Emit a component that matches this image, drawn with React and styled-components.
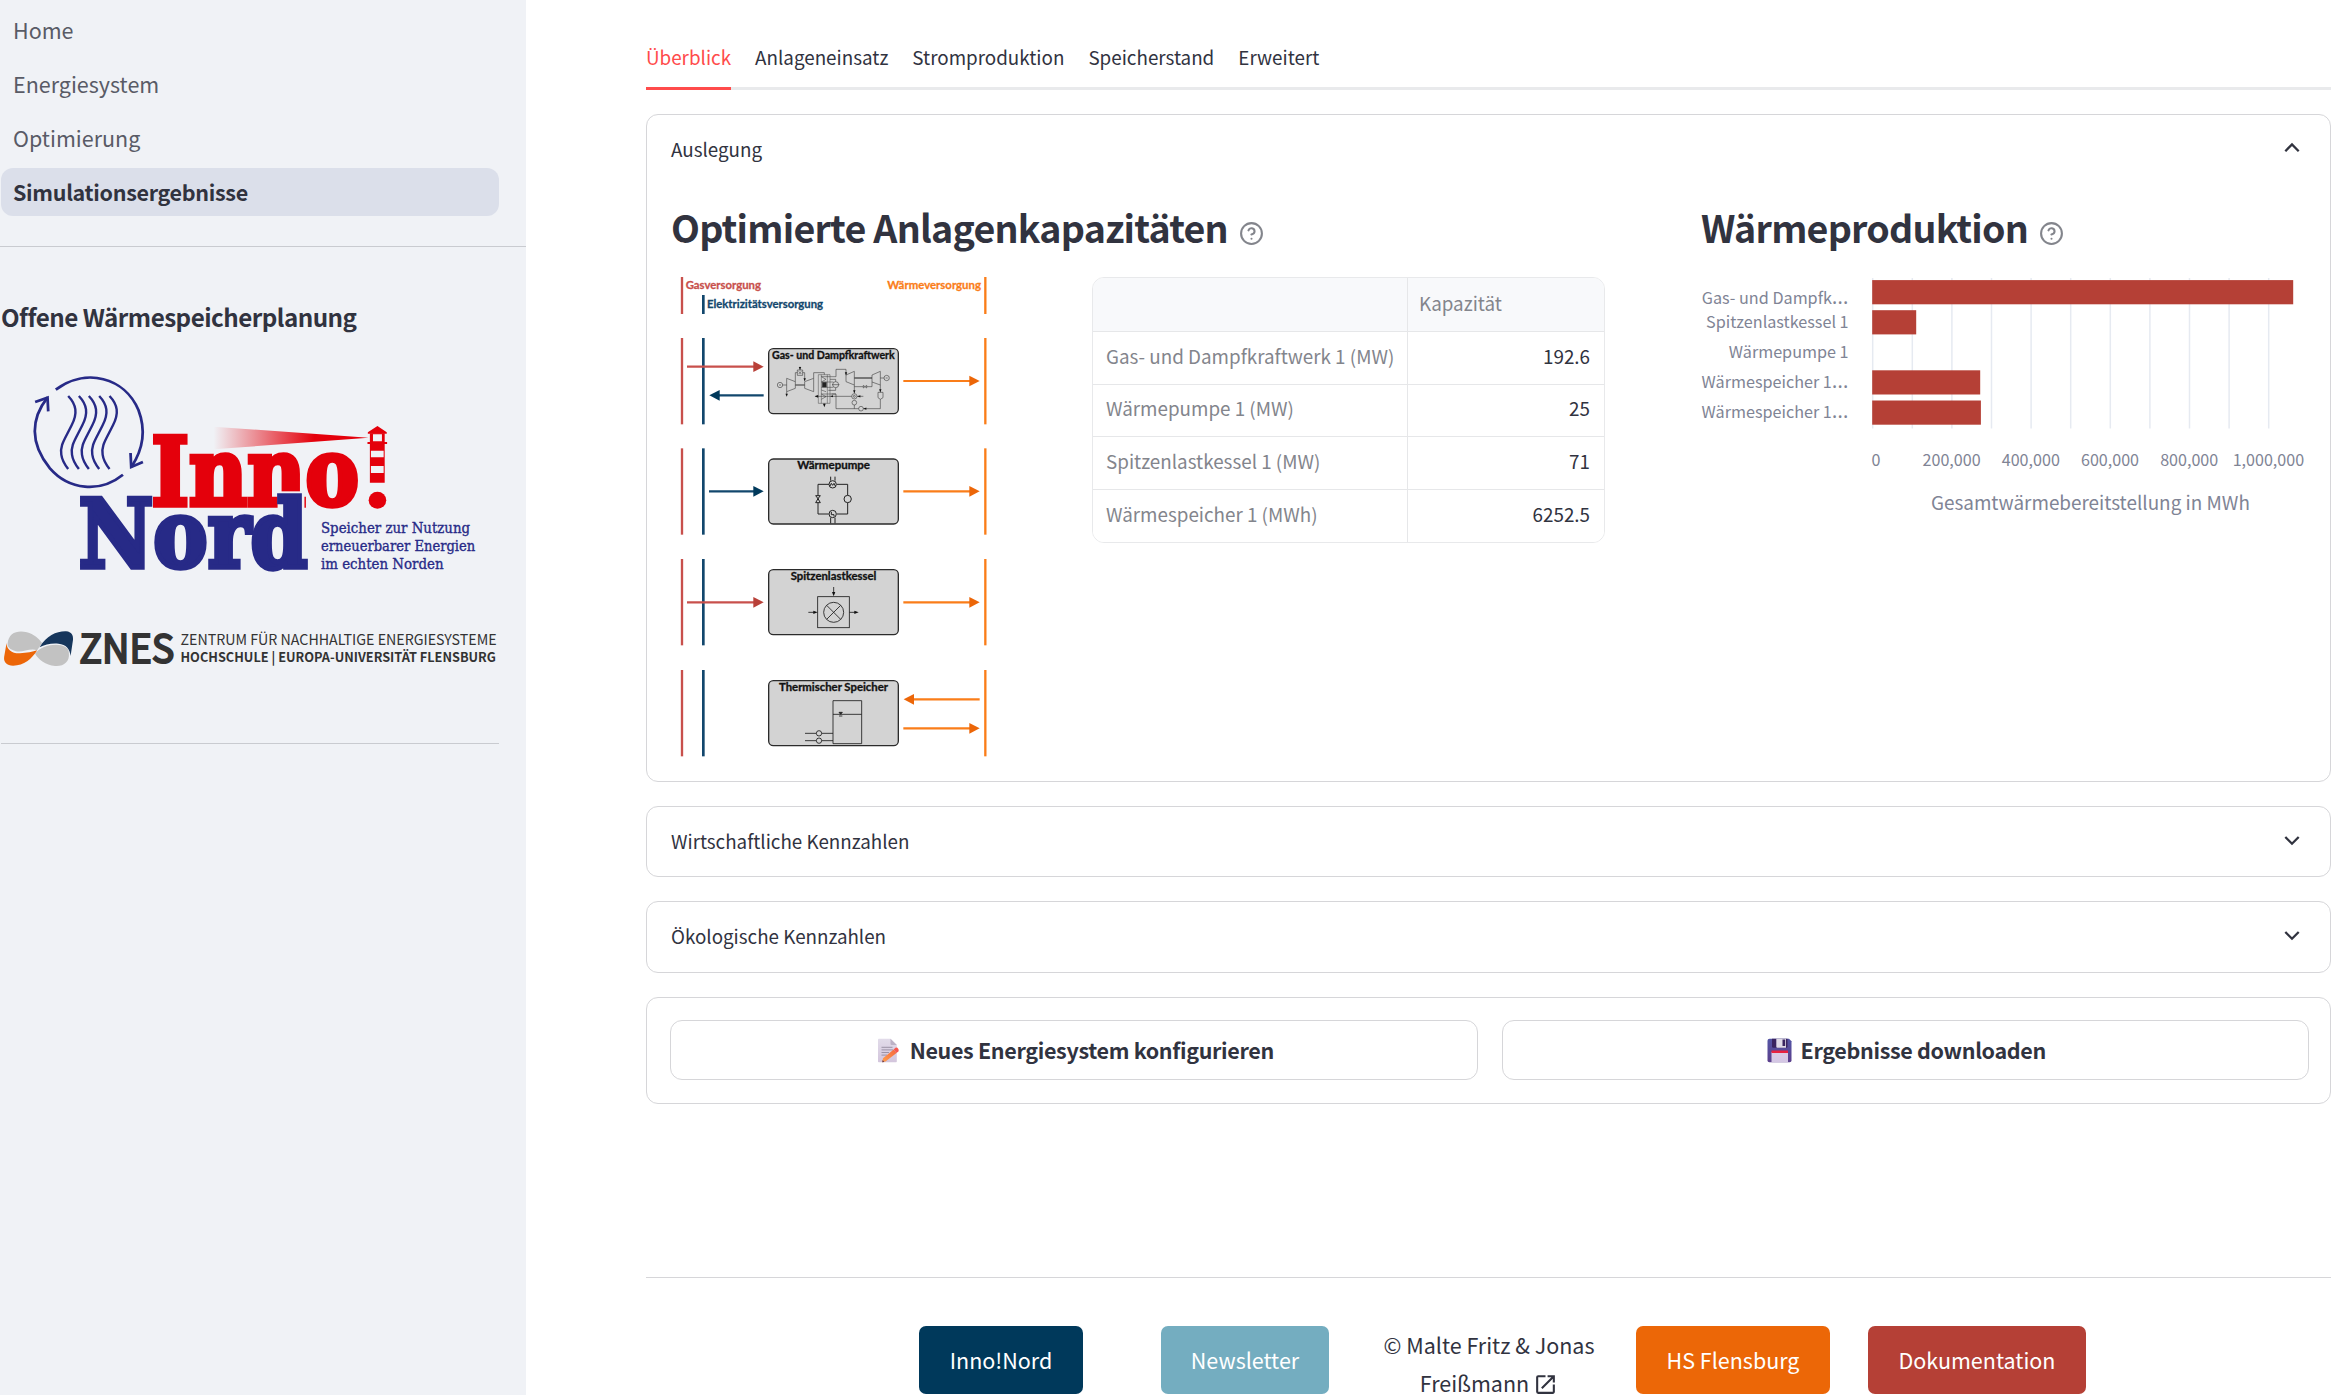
import React from "react";
import styled, { createGlobalStyle } from "styled-components";

const SANS = `"Noto Sans CJK SC", "Open Sans", sans-serif`;
const INK = "#31333f";
const BORDER = "#d6d6d9";

const GlobalStyle = createGlobalStyle`
  *, *::before, *::after { box-sizing: border-box; }
  html, body { margin: 0; padding: 0; height: 100%; background: #fff; overflow: hidden; }
  body { font-family: ${SANS}; color: ${INK}; font-size: 21.5px; }
  h2, h3, p { margin: 0; }
`;

const Shell = styled.div`
  display: flex;
  width: 2338px;
  height: 1395px;
  overflow: hidden;
`;

const Sidebar = styled.aside`
  flex: none;
  width: 526px;
  height: 100%;
  background: #f0f2f6;
`;

const Nav = styled.nav`
  display: flex;
  flex-direction: column;
  gap: 6px;
  padding: 6px 27px 30px 1px;
`;

const NavItem = styled.a`
  display: flex;
  align-items: center;
  height: 48px;
  padding: 0 0 2px 12px;
  border-radius: 12px;
  background: ${(p) => (p.$active ? "#dbdfea" : "transparent")};
  color: ${(p) => (p.$active ? INK : "#595b66")};
  font-weight: ${(p) => (p.$active ? 600 : 400)};
  letter-spacing: ${(p) => (p.$active ? "-0.31px" : "0")};
`;

const SideRule = styled.hr`
  height: 1px;
  margin: 0 ${(p) => (p.$inset ? "27px 0 1px" : "0")};
  border: 0;
  background: #c9cbd0;
`;

const SideBody = styled.div`
  display: flex;
  flex-direction: column;
`;

const SideTitle = styled.h3`
  padding: 50px 0 33px 1px;
  font-size: 24.2px;
  line-height: 40px;
  font-weight: 600;
  letter-spacing: -0.52px;
  white-space: nowrap;
`;

const LogoSvg = styled.svg`
  display: block;
  width: 498px;
  height: ${(p) => p.$h}px;
  margin-bottom: ${(p) => p.$gap}px;
  overflow: visible;
`;

const Main = styled.main`
  flex: none;
  width: 1685px;
  margin-left: 120px;
  padding-top: 27px;
`;

const TabBar = styled.div`
  display: flex;
  gap: 24px;
  height: 63px;
  border-bottom: 3px solid #e9eaec;
  margin-bottom: 24px;
`;

const Tab = styled.div`
  display: flex;
  align-items: center;
  height: 63px;
  padding-bottom: 1px;
  font-size: 18.82px;
  white-space: nowrap;
  color: ${(p) => (p.$active ? "#ff4b4b" : INK)};
  border-bottom: 3px solid ${(p) => (p.$active ? "#ff4b4b" : "transparent")};
`;

const Panel = styled.section`
  height: ${(p) => p.$h}px;
  margin-bottom: 24px;
  border: 1px solid ${BORDER};
  border-radius: 12px;
`;

const Summary = styled.div`
  display: flex;
  align-items: center;
  justify-content: space-between;
  height: ${(p) => p.$h}px;
  padding: 0 29px ${(p) => p.$lift || 0}px 24px;
  font-size: 18.8px;
  svg { margin-bottom: ${(p) => (p.$lift ? 0 : 2)}px; }
`;

const Columns = styled.div`
  display: flex;
  padding: 20px 24px 0;
`;

const Column = styled.div`
  flex: none;
  width: ${(p) => p.$w}px;
`;

const Heading = styled.h2`
  display: flex;
  align-items: center;
  gap: 11px;
  height: 50px;
  margin-bottom: 19px;
  font-size: 37.6px;
  line-height: 50px;
  font-weight: 600;
  letter-spacing: -0.76px;
  white-space: nowrap;
`;

const HelpSvg = styled.svg`
  width: 25px;
  height: 25px;
  margin-top: 12px;
  fill: none;
  stroke: #83858c;
  stroke-width: 2;
  stroke-linecap: round;
  stroke-linejoin: round;
`;

const Split = styled.div`
  display: flex;
`;

const DiagramSvg = styled.svg`
  flex: none;
  display: block;
  width: 340px;
  height: 490px;
  margin-right: 81px;
`;

const Table = styled.div`
  width: 513px;
  height: 266px;
  margin-top: 6px;
  border: 1px solid #e8e9eb;
  border-radius: 12px;
  overflow: hidden;
  font-size: 18.82px;
`;

const TableRow = styled.div`
  display: grid;
  grid-template-columns: 315px 1fr;
  height: ${(p) => (p.$head ? 54 : 52.5)}px;
  background: ${(p) => (p.$head ? "#f8f9fb" : "#fff")};
  border-bottom: 1px solid #e6e7e9;
  &:last-child { border-bottom: 0; }
`;

const Cell = styled.div`
  display: flex;
  align-items: center;
  justify-content: ${(p) => (p.$num ? "flex-end" : "flex-start")};
  padding: 0 14px 5px ${(p) => (p.$first ? 13 : 11)}px;
  border-right: ${(p) => (p.$first ? "1px solid #e6e7e9" : "0")};
  color: ${(p) => (p.$num ? INK : "#83858c")};
  white-space: nowrap;
`;

const ChartSvg = styled.svg`
  display: block;
  width: 605px;
  height: 250px;
  overflow: visible;
  font-family: ${SANS};
  fill: #808495;
`;

const Actions = styled.div`
  display: grid;
  grid-template-columns: 1fr 1fr;
  gap: 24px;
  padding: 22px 21px 0 23px;
`;

const ActionButton = styled.button`
  display: flex;
  align-items: center;
  justify-content: center;
  gap: 9px;
  height: 60px;
  padding: 0 0 2px 2px;
  border: 1px solid ${BORDER};
  border-radius: 12px;
  background: #fff;
  color: ${INK};
  font-family: inherit;
  font-size: 21.5px;
  font-weight: 600;
  letter-spacing: -0.33px;
`;

const EmojiSvg = styled.svg`
  width: 25px;
  height: 25px;
  margin-top: 2px;
`;

const Footer = styled.footer`
  display: grid;
  grid-template-columns: repeat(7, 1fr);
  gap: 24px;
  margin-top: 173px;
  padding: 48px 0 0 1px;
  border-top: 1px solid ${BORDER};
`;

const FooterCell = styled.div`
  display: flex;
  justify-content: center;
  text-align: center;
  line-height: 38.4px;
`;

const LinkButton = styled.a`
  display: flex;
  align-items: center;
  height: 68px;
  padding: 0 30.3px;
  border-radius: 7px;
  background: ${(p) => p.$bg};
  color: #fff;
  white-space: nowrap;
`;

const OpenSvg = styled.svg`
  width: 25px;
  height: 25px;
  margin-left: 4px;
  vertical-align: -5px;
`;

const Help = () => (
  <HelpSvg viewBox="0 0 24 24">
    <circle cx="12" cy="12" r="10" />
    <path d="M9.09 9a3 3 0 0 1 5.83 1c0 2-3 3-3 3M12 17h.01" />
  </HelpSvg>
);

const Chevron = ({ up }) => (
  <svg width="18" height="18" viewBox="0 0 18 18" fill="none" stroke={INK} strokeWidth="2.3">
    <path d={up ? "M2.3 12.2 9 5.5l6.7 6.7" : "M2.3 5 9 11.7 15.7 5"} />
  </svg>
);

const BLUE = "#272a87";
const RED = "#e4000b";
const WAVES = [198, 229, 258, 288, 318];

const InnoNordLogo = () => (
  <LogoSvg $h={210} $gap={43.3} viewBox="0 60 1446 630" preserveAspectRatio="none">
    <defs>
      <linearGradient id="beam" x1="0" x2="1">
        <stop offset="0" stopColor={RED} stopOpacity="0" />
        <stop offset="0.65" stopColor={RED} />
      </linearGradient>
    </defs>
    <g fill="none" stroke={BLUE} strokeWidth="8">
      <path d="M162 119C250 52 362 82 402 180C424 240 414 300 382 350" />
      <path d="M357 374C290 430 200 420 145 355C85 280 90 205 138 142" />
      <path d="M102 156 138 143 140 184M415 336 381 351 379 309" />
      {WAVES.map((x) => (
        <path key={x} strokeWidth="7" d={`M${x} 138c24 26 28 52 10 88c-22 46-34 60-30 88c2 16 10 30 20 43`} />
      ))}
    </g>
    <path d="M620 230 1070 263 620 298Z" fill="url(#beam)" />
    <g fontFamily='"DejaVu Serif", serif' fontWeight="700" fontSize="283" strokeWidth="16">
      <text x="440" y="465" fill={RED} stroke={RED} textLength="602" lengthAdjust="spacingAndGlyphs">Inno</text>
      <path d="M806 424H884V482H806Z" fill="#f0f2f6" />
      <text x="229" y="652" fill={BLUE} stroke={BLUE} textLength="664" lengthAdjust="spacingAndGlyphs">Nord</text>
    </g>
    <g fill={RED}>
      <path d="M1096 228 1123 247V251H1068V247ZM1067 276H1124V282H1067Z" />
      <path fillRule="evenodd" d="M1074 250H1117V398H1074ZM1083 253V274H1109V253ZM1077 302V322H1114V302ZM1077 348V369H1114V348Z" />
      <circle cx="1096" cy="451" r="25.5" />
    </g>
    <g fontFamily='"DejaVu Serif", serif' fontSize="42" fill={BLUE} stroke={BLUE} strokeWidth="1">
      <text x="932" y="548" textLength="433" lengthAdjust="spacingAndGlyphs">Speicher zur Nutzung</text>
      <text x="932" y="603" textLength="448" lengthAdjust="spacingAndGlyphs">erneuerbarer Energien</text>
      <text x="932" y="657" textLength="356" lengthAdjust="spacingAndGlyphs">im echten Norden</text>
    </g>
  </LogoSvg>
);

const ZnesLogo = () => (
  <LogoSvg $h={50} $gap={69.7} viewBox="0 820 1446 150" preserveAspectRatio="none">
    <path d="M22 882C25 850 50 841 78 848C98 853 112 866 122 880L108 902C85 893 60 914 38 902C26 896 21 890 22 882Z" fill="#c2c2c2" />
    <path d="M200 910C203 936 185 951 160 949C132 946 112 930 102 912C120 888 165 878 190 892C197 897 200 902 200 910Z" fill="#c2c2c2" />
    <path d="M115 893C135 858 165 844 192 845C208 847 213 857 212 870L205 919C203 898 192 884 170 882C150 880 130 884 115 893Z" fill="#16365c" />
    <path d="M19 880C19 900 35 912 58 911C78 910 95 906 108 902C92 928 70 948 38 948C20 948 10 938 12 922Z" fill="#ec6608" />
    <g fontFamily={SANS} fill="#333">
      <text x="230" y="940" fontSize="118" fontWeight="400" stroke="#333" strokeWidth="6" textLength="276" lengthAdjust="spacingAndGlyphs">ZNES</text>
      <text x="524" y="885" fontSize="44" fontWeight="400" textLength="918" lengthAdjust="spacingAndGlyphs">ZENTRUM FÜR NACHHALTIGE ENERGIESYSTEME</text>
      <text x="524" y="937" fontSize="39" fontWeight="700" textLength="916" lengthAdjust="spacingAndGlyphs">HOCHSCHULE | EUROPA-UNIVERSITÄT FLENSBURG</text>
    </g>
  </LogoSvg>
);

const GAS = "#c8504c";
const GAS_DARK = "#b84038";
const ELEC = "#12476d";
const ELEC_DARK = "#00395b";
const HEAT = "#fa7d19";
const HEAT_DARK = "#ec6608";

const Arrow = ({ from, to, y, color, head }) => {
  const d = to > from ? -1 : 1;
  return (
    <g>
      <path d={`M${from} ${y}H${to + d * 28}`} stroke={color} strokeWidth="6.5" />
      <path d={`M${to} ${y}L${to + d * 31} ${y - 16}V${y + 16}Z`} fill={head} />
    </g>
  );
};

const UNITS = [
  { top: 234, title: "Gas- und Dampfkraftwerk", x: 336, w: 368 },
  { top: 565, title: "Wärmepumpe", x: 412, w: 218 },
  { top: 897, title: "Spitzenlastkessel", x: 392, w: 257 },
  { top: 1230, title: "Thermischer Speicher", x: 357, w: 327 },
];

const Tip = ({ x, y, r = 0, s = 1 }) => (
  <path d="M0 0-13-5V5Z" fill="#111" stroke="none" transform={`translate(${x} ${y}) rotate(${r}) scale(${s})`} />
);

const PlantDiagram = () => (
  <DiagramSvg viewBox="33 33 1020 1470">
    <path d="M66 51V162" stroke={GAS} strokeWidth="7" />
    <path d="M130 105V162" stroke={ELEC} strokeWidth="8" />
    <path d="M976 51V162" stroke={HEAT} strokeWidth="7" />
    <g fontFamily="Lato, sans-serif" fontWeight="700" fontSize="31">
      <text x="77" y="88" fill={GAS} stroke={GAS} strokeWidth="0.8" textLength="226" lengthAdjust="spacingAndGlyphs">Gasversorgung</text>
      <text x="141" y="145" fill={ELEC} stroke={ELEC} strokeWidth="0.8" textLength="348" lengthAdjust="spacingAndGlyphs">Elektrizitätsversorgung</text>
      <text x="682" y="88" fill={HEAT} stroke={HEAT} strokeWidth="0.8" textLength="281" lengthAdjust="spacingAndGlyphs">Wärmeversorgung</text>
      {UNITS.map((u) => (
        <g key={u.title}>
          <path d={`M66 ${u.top}v259`} stroke={GAS} strokeWidth="7" />
          <path d={`M130 ${u.top}v259`} stroke={ELEC} strokeWidth="8" />
          <path d={`M976 ${u.top}v259`} stroke={HEAT} strokeWidth="7" />
          <rect x="326" y={u.top + 32} width="389" height="195" rx="14" fill="#d3d3d3" stroke="#2b2b2b" strokeWidth="4" />
          <text x={u.x} y={u.top + 63} fill="#111" stroke="#111" strokeWidth="0.9" textLength={u.w} lengthAdjust="spacingAndGlyphs">{u.title}</text>
        </g>
      ))}
    </g>
    <Arrow from={81} to={311} y={320} color={GAS} head={GAS_DARK} />
    <Arrow from={311} to={148} y={406} color={ELEC} head={ELEC_DARK} />
    <Arrow from={730} to={959} y={363} color={HEAT} head={HEAT_DARK} />
    <Arrow from={147} to={311} y={694} color={ELEC} head={ELEC_DARK} />
    <Arrow from={730} to={959} y={694} color={HEAT} head={HEAT_DARK} />
    <Arrow from={81} to={311} y={1027} color={GAS} head={GAS_DARK} />
    <Arrow from={730} to={959} y={1027} color={HEAT} head={HEAT_DARK} />
    <Arrow from={959} to={731} y={1318} color={HEAT} head={HEAT_DARK} />
    <Arrow from={730} to={959} y={1405} color={HEAT} head={HEAT_DARK} />

    {/* combined cycle */}
    <g fill="none" stroke="#333" strokeWidth="1.7">
      <circle cx="360" cy="375" r="8" />
      <path d="M357 375h6M368 375H380M380 355V395L406 385V365ZM434 365V385L461 395V355ZM380 395V404" />
      <path d="M406 375H434" strokeWidth="3" />
      <path d="M406 365V338H412M428 338H434V362M461 355V338H493V344M412 330H428V346H412ZM416 334l8 8M424 334l-8 8M420 320V330" />
      <path d="M475 344H510V430H475ZM493 430V436M484 344v86M502 344v86" strokeWidth="1.3" />
      <path d="M528 350H484l14 8-14 8H520M520 382H484M528 402H484l14 8-14 8M484 390l14 5" strokeWidth="1.5" />
      <path d="M487 367h12v14h-12z" fill="#222" />
      <circle cx="527" cy="374" r="9" />
      <path d="M516 374h22M527 365V358H510M527 383v8H505" />
      <path d="M528 350V328H558V345M558 345V365L583 375V334ZM636 345V366L661 375V334ZM661 354H672" />
      <path d="M583 354H636" strokeWidth="3.5" />
      <circle cx="680" cy="354" r="8" />
      <path d="M677 354h6M583 375V400M583 380H610M620 380H636V366M610 376v8l10-8v8ZM661 375V397M654 397H669V413L661 418 654 413ZM661 418V446H610" />
      <circle cx="583" cy="409" r="8" />
      <circle cx="583" cy="409" r="3" />
      <circle cx="583" cy="428" r="7" />
      <circle cx="603" cy="446" r="7" />
      <path d="M610 409H591M575 409H466M583 435V446M596 446H528V402H515" />
    </g>
    <Tip x={380} y={410} r={90} s={0.7} />
    <Tip x={420} y={330} r={90} s={0.7} />
    <Tip x={434} y={364} r={90} s={0.7} />
    <Tip x={493} y={442} r={90} s={0.8} />
    <Tip x={464} y={409} r={180} s={0.8} />
    <Tip x={511} y={409} r={180} s={0.6} />
    <Tip x={558} y={346} r={90} s={0.7} />
    <Tip x={583} y={400} r={90} s={0.7} />
    <Tip x={592} y={409} r={180} s={0.7} />
    <Tip x={610} y={446} r={180} s={0.7} />
    <Tip x={661} y={397} r={90} s={0.7} />

    {/* heat pump */}
    <g fill="none" stroke="#222" strokeWidth="3">
      <path d="M507 673H474V762H506M530 673H563V762H531M512 662V650M525 662V650M512 773V790M525 773V790" />
      <circle cx="518" cy="673" r="11" fill="#d3d3d3" />
      <path d="M510 678l4-8 4 6 4-6 4 8" />
      <circle cx="518" cy="762" r="11" fill="#d3d3d3" />
      <path d="M514 756v8h8v5" />
      <circle cx="563" cy="717" r="11" fill="#d3d3d3" />
      <path d="M467 707h14l-7 9ZM467 728h14l-7-12Z" fill="#d3d3d3" />
    </g>

    {/* peak load boiler */}
    <g fill="none" stroke="#222" strokeWidth="2.6">
      <rect x="473" y="1010" width="95" height="93" />
      <circle cx="521" cy="1057" r="30" />
      <path d="M500 1036l42 42M542 1036l-42 42M521 981V1000M445 1057H462M568 1057H586" />
    </g>
    <Tip x={521} y={1009} r={90} />
    <Tip x={473} y={1057} />
    <Tip x={596} y={1057} />

    {/* thermal storage */}
    <g fill="none" stroke="#222" strokeWidth="2.6">
      <path d="M519 1322H605V1451H519ZM519 1363H605M435 1420H519M435 1442H519" />
      <path d="M537 1357h10l-5 6ZM537 1368h10" fill="#222" />
      <circle cx="477" cy="1420" r="8" fill="#d3d3d3" />
      <circle cx="477" cy="1442" r="8" fill="#d3d3d3" />
    </g>
  </DiagramSvg>
);

const CAPACITIES = [
  ["Gas- und Dampfkraftwerk 1 (MW)", "192.6"],
  ["Wärmepumpe 1 (MW)", "25"],
  ["Spitzenlastkessel 1 (MW)", "71"],
  ["Wärmespeicher 1 (MWh)", "6252.5"],
];

const BARS = [
  { label: "Gas- und Dampfk", cut: true, y: 280.1, w: 421, base: 304 },
  { label: "Spitzenlastkessel 1", y: 310.2, w: 44, base: 328 },
  { label: "Wärmepumpe 1", y: 340, w: 0, base: 358.2 },
  { label: "Wärmespeicher 1", cut: true, y: 370.3, w: 108, base: 388.3 },
  { label: "Wärmespeicher 1", cut: true, y: 400.5, w: 108.7, base: 418.3 },
];
const TICKS = ["200,000", "400,000", "600,000", "800,000", "1,000,000"];
const STEP = 39.6;

const HeatChart = () => (
  <ChartSvg viewBox="1701 271 605 250">
    {Array.from({ length: 11 }, (_, i) => (
      <path key={i} d={`M${1872.7 + i * STEP} 278V428.5`} stroke="#e6eaf1" strokeWidth="1.5" />
    ))}
    {BARS.map((b, i) => (
      <g key={i}>
        <rect x="1872.2" y={b.y} width={b.w} height="24.2" fill="#b54036" />
        <text x="1848.6" y={b.base} fontSize="16.2" textAnchor="end">
          {b.label}
          {b.cut && <tspan fontFamily="Open Sans" fontSize="21.5">…</tspan>}
        </text>
      </g>
    ))}
    <text x="1871.5" y="466" fontSize="16.1">0</text>
    {TICKS.map((t, i) => (
      <text key={t} x={1872.4 + (i + 1) * 2 * STEP} y="466" fontSize="16.1" textAnchor="middle">{t}</text>
    ))}
    <text x="2090.4" y="510" fontSize="18.9" textAnchor="middle">Gesamtwärmebereitstellung in MWh</text>
  </ChartSvg>
);

const MemoIcon = () => (
  <EmojiSvg viewBox="0 0 25 25">
    <defs>
      <linearGradient id="pen" x1="0" y1="1" x2="1" y2="0">
        <stop offset="0" stopColor="#ffa04d" />
        <stop offset="1" stopColor="#f5673d" />
      </linearGradient>
      <linearGradient id="paper" x1="0" y1="0" x2="0" y2="1">
        <stop offset="0" stopColor="#e2dcea" />
        <stop offset="1" stopColor="#d3c5dc" />
      </linearGradient>
    </defs>
    <path d="M2 1.5Q2 .7 2.800.7H14.500L20.800 7V23.500Q20.800 24.300 20 24.300H2.800Q2 24.300 2 23.500Z" fill="url(#paper)" />
    <path d="M14.500.7 20.800 7H15.500Q14.500 7 14.500 6Z" fill="#bcb2c6" />
    <path d="M5.500 9.300H16.500M5.500 11.900H17M5.500 14.500H13M5.500 17.100H11" stroke="#9b93a6" strokeWidth="1" />
    <path d="M6.200 24.300 7 20.200 17.700 11.500 20.500 15 9.500 23.600Z" fill="url(#pen)" />
    <path d="M17.700 11.500 19.500 9.800Q21 9 22.200 10.700Q23.300 12.300 22.300 13.500L20.500 15Z" fill="#f8574f" />
    <path d="M6.200 24.300 6.700 22 8.300 23.900Z" fill="#5a3550" />
  </EmojiSvg>
);

const DiskIcon = () => (
  <EmojiSvg viewBox="0 0 25 25">
    <defs>
      <linearGradient id="disk" x1="0" y1="0" x2="0" y2="1">
        <stop offset="0" stopColor="#5355a5" />
        <stop offset="1" stopColor="#5b3f8c" />
      </linearGradient>
      <linearGradient id="label" x1="0" y1="0" x2="0" y2="1">
        <stop offset="0" stopColor="#dccbe4" />
        <stop offset="1" stopColor="#d3c6e4" />
      </linearGradient>
    </defs>
    <path d="M2.500.7H22L24.500 3.300V22.500Q24.500 24.300 22.700 24.300H2.300Q.5 24.300.5 22.500V2.700Q.5.700 2.500.700Z" fill="url(#disk)" />
    <path d="M5 .7H20.500V8.500Q20.500 9.700 19.300 9.700H6.200Q5 9.700 5 8.500Z" fill="#3a2460" />
    <path d="M9.300.7H19V9.700H10.300Q9.300 9.700 9.300 8.700Z" fill="#e0dbe8" />
    <path d="M15.500 1.500H18.200V8H15.500Z" fill="#3a2460" />
    <path d="M4.500 14H21V24.300H4.500Z" fill="url(#label)" />
    <path d="M4.500 12.500H21V15H4.500Z" fill="#e8213f" />
  </EmojiSvg>
);

const OpenIcon = () => (
  <OpenSvg viewBox="0 0 24 24" fill={INK}>
    <path d="M19 19H5V5h7V3H5a2 2 0 0 0-2 2v14a2 2 0 0 0 2 2h14c1.100 0 2-.9 2-2v-7h-2zM14 3v2h3.590l-9.830 9.830 1.410 1.410L19 6.410V10h2V3z" />
  </OpenSvg>
);

const NAV = ["Home", "Energiesystem", "Optimierung", "Simulationsergebnisse"];
const TABS = ["Überblick", "Anlageneinsatz", "Stromproduktion", "Speicherstand", "Erweitert"];

export default function App() {
  return (
    <>
      <GlobalStyle />
      <Shell>
        <Sidebar>
          <Nav>
            {NAV.map((n, i) => (
              <NavItem key={n} $active={i === 3}>{n}</NavItem>
            ))}
          </Nav>
          <SideRule />
          <SideBody>
            <SideTitle>Offene Wärmespeicherplanung</SideTitle>
            <InnoNordLogo />
            <ZnesLogo />
            <SideRule $inset />
          </SideBody>
        </Sidebar>
        <Main>
          <TabBar>
            {TABS.map((t, i) => (
              <Tab key={t} $active={i === 0}>{t}</Tab>
            ))}
          </TabBar>
          <Panel $h={668}>
            <Summary $h={67}>
              Auslegung
              <Chevron up />
            </Summary>
            <Columns>
              <Column $w={1030}>
                <Heading>
                  Optimierte Anlagenkapazitäten
                  <Help />
                </Heading>
                <Split>
                  <PlantDiagram />
                  <Table>
                    <TableRow $head>
                      <Cell $first />
                      <Cell>Kapazität</Cell>
                    </TableRow>
                    {CAPACITIES.map(([name, value]) => (
                      <TableRow key={name}>
                        <Cell $first>{name}</Cell>
                        <Cell $num>{value}</Cell>
                      </TableRow>
                    ))}
                  </Table>
                </Split>
              </Column>
              <Column $w={605}>
                <Heading>
                  Wärmeproduktion
                  <Help />
                </Heading>
                <HeatChart />
              </Column>
            </Columns>
          </Panel>
          <Panel $h={71}>
            <Summary $h={69} $lift={2}>
              Wirtschaftliche Kennzahlen
              <Chevron />
            </Summary>
          </Panel>
          <Panel $h={72}>
            <Summary $h={70} $lift={3}>
              Ökologische Kennzahlen
              <Chevron />
            </Summary>
          </Panel>
          <Panel $h={107}>
            <Actions>
              <ActionButton>
                <MemoIcon />
                Neues Energiesystem konfigurieren
              </ActionButton>
              <ActionButton>
                <DiskIcon />
                Ergebnisse downloaden
              </ActionButton>
            </Actions>
          </Panel>
          <Footer>
            <FooterCell />
            <FooterCell><LinkButton $bg="#00395b">Inno!Nord</LinkButton></FooterCell>
            <FooterCell><LinkButton $bg="#74adc0">Newsletter</LinkButton></FooterCell>
            <FooterCell>
              <p>© Malte Fritz &amp; Jonas Freißmann<OpenIcon /></p>
            </FooterCell>
            <FooterCell><LinkButton $bg="#ec6707">HS Flensburg</LinkButton></FooterCell>
            <FooterCell><LinkButton $bg="#b54036">Dokumentation</LinkButton></FooterCell>
            <FooterCell />
          </Footer>
        </Main>
      </Shell>
    </>
  );
}
